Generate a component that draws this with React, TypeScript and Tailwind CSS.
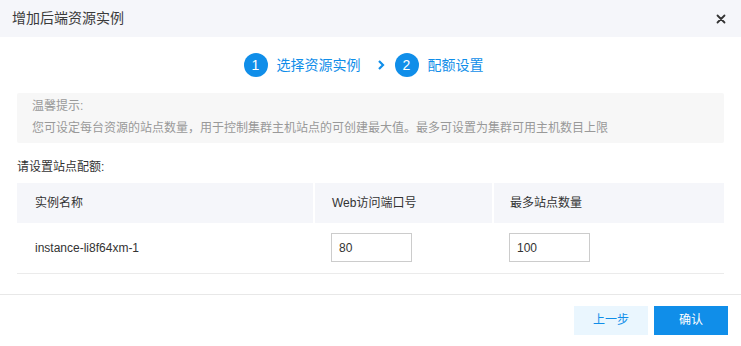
import React from 'react';

const FONT = { fontFamily: '"Liberation Sans", "Noto Sans CJK SC", sans-serif' };

export default function App() {
  return (
    <div className="w-[741px] h-[346px] bg-white flex flex-col text-[#333]" style={FONT}>
      {/* Header */}
      <header className="h-[37px] bg-[#f5f6fa] flex items-center justify-between pl-3 pr-[15px] shrink-0">
        <span className="text-[14px] text-[#3a3a3a]">增加后端资源实例</span>
        <svg width="10" height="10" viewBox="0 0 10 10" className="text-[#333]">
          <path d="M1.5 1.5 L8.5 8.5 M8.5 1.5 L1.5 8.5" stroke="currentColor" strokeWidth="1.8" strokeLinecap="round" />
        </svg>
      </header>

      {/* Steps */}
      <div className="h-[56px] flex items-center justify-center pr-[14px]">
        <div className="flex items-center">
          <span className="w-[24px] h-[24px] rounded-full bg-[#108ee9] text-white text-[14px] flex items-center justify-center">1</span>
          <span className="ml-[9px] text-[14px] text-[#108ee9]">选择资源实例</span>
          <svg width="10" height="12" viewBox="0 0 10 12" className="ml-[15px] mr-[9px] text-[#108ee9]">
            <path d="M3 2 L7 6 L3 10" fill="none" stroke="currentColor" strokeWidth="2.2" />
          </svg>
          <span className="w-[24px] h-[24px] rounded-full bg-[#108ee9] text-white text-[14px] flex items-center justify-center">2</span>
          <span className="ml-[9px] text-[14px] text-[#108ee9]">配额设置</span>
        </div>
      </div>

      {/* Body */}
      <div className="px-[17px] flex-1">
        <div className="bg-[#f7f7f7] rounded-[2px] pl-[15px] pt-[2px] pb-[4px] text-[12px] text-[#999] leading-[22px]">
          <p>温馨提示:</p>
          <p>您可设定每台资源的站点数量，用于控制集群主机站点的可创建最大值。最多可设置为集群可用主机数目上限</p>
        </div>

        <p className="mt-[14px] text-[12px] leading-[20px] text-[#333]">请设置站点配额:</p>

        <table className="mt-[6px] w-full text-[12px] border-collapse">
          <thead>
            <tr className="bg-[#f5f6fa] h-[40px]">
              <th className="w-[297px] text-left font-normal pl-[18px] border-r-2 border-white">实例名称</th>
              <th className="w-[179px] text-left font-normal pl-[17px] border-r-2 border-white">Web访问端口号</th>
              <th className="text-left font-normal pl-[16px]">最多站点数量</th>
            </tr>
          </thead>
          <tbody>
            <tr className="h-[50px] border-b border-[#ebebeb]">
              <td className="pl-[18px]">instance-li8f64xm-1</td>
              <td className="pl-[17px]">
                <input
                  defaultValue="80"
                  className="w-[81px] h-[29px] border border-[#ccc] px-[7px] text-[12px] text-[#333] outline-none"
                  style={FONT}
                />
              </td>
              <td className="pl-[16px]">
                <input
                  defaultValue="100"
                  className="w-[81px] h-[29px] border border-[#ccc] px-[7px] text-[12px] text-[#333] outline-none"
                  style={FONT}
                />
              </td>
            </tr>
          </tbody>
        </table>
      </div>

      {/* Footer */}
      <footer className="h-[52px] border-t border-[#e8e8e8] flex items-center justify-end gap-[6px] pr-[13px] pb-[1px] shrink-0">
        <button className="w-[74px] h-[29px] bg-[#eaf6fe] text-[#108ee9] text-[12px]">上一步</button>
        <button className="w-[74px] h-[29px] bg-[#108ee9] text-white text-[12px]">确认</button>
      </footer>
    </div>
  );
}
